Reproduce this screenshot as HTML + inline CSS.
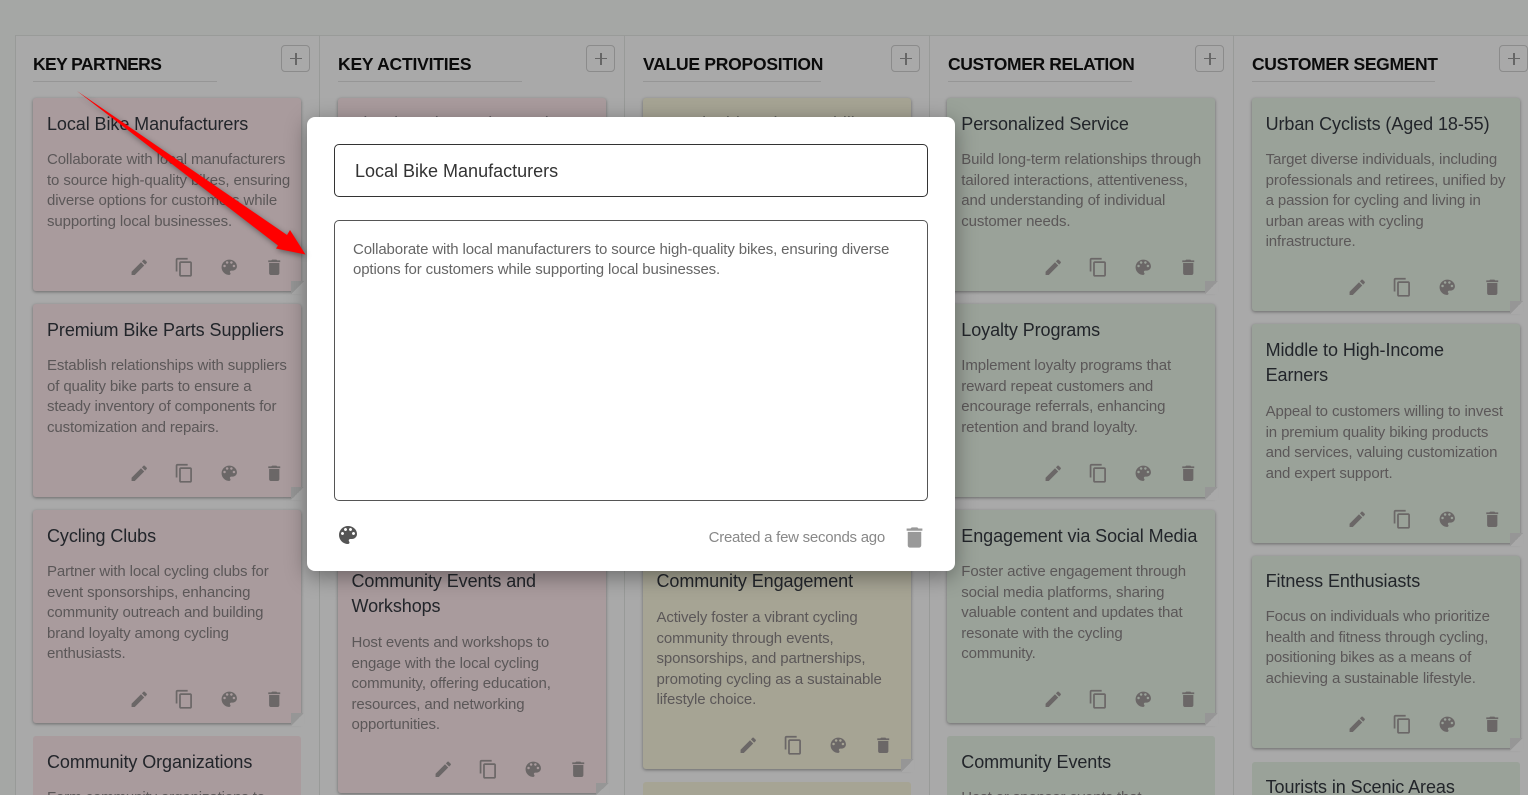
<!DOCTYPE html>
<html><head><meta charset="utf-8"><title>Canvas</title>
<style>
html,body{margin:0;padding:0;width:1528px;height:795px;overflow:hidden;background:#a5a7a5;font-family:"Liberation Sans",sans-serif}
#r{position:relative;width:1528px;height:795px;overflow:hidden;background:#a5a7a5}
.col{position:absolute;top:35px;height:760px;background:#a9a9a9;border-left:1px solid #989a98;border-top:1px solid #999b99;box-sizing:border-box}
.hd{position:absolute;top:52.5px;height:28.5px;line-height:22px;font-size:17.5px;font-weight:700;color:#0b0b0b;white-space:nowrap;border-bottom:1px solid #969696}
.plus{position:absolute;top:45px;width:29px;height:27px;border:1px solid #8b8b8b;border-radius:4px;box-sizing:border-box;background:#a9a9a9}
.plus:before{content:"";position:absolute;left:8px;top:11.6px;width:12px;height:1.6px;background:#666}
.plus:after{content:"";position:absolute;left:13.2px;top:6.5px;width:1.6px;height:12px;background:#666}
.c{position:absolute;width:268px;border-radius:3px 3px 0 3px;box-shadow:0 1px 3px rgba(0,0,0,.38);box-sizing:border-box}
.p{background:#a99b9d}.y{background:#a6a494}.g{background:#9aa299}
.c h3{margin:0;position:absolute;left:14px;top:13.5px;font-size:18px;font-weight:400;line-height:25.6px;color:#22252a;white-space:nowrap;letter-spacing:-.08px}
.c div{position:absolute;left:14px;font-size:15px;line-height:20.6px;color:#5b5758;white-space:nowrap;letter-spacing:-.12px}
.c svg{position:absolute;bottom:14px;width:20.5px;height:20.5px;fill:#6b6767}
.c svg.a{right:152px}.c svg.b{right:107px}.c svg.d{right:62px}.c svg.e{right:17px}
.c i{position:absolute;right:-3px;bottom:-3px;width:13px;height:13px;background:linear-gradient(to bottom right,#969696 50%,#a9a9a9 50%)}
.cut{overflow:hidden;border-radius:3px 3px 0 0;box-shadow:none}
#m{position:absolute;left:307px;top:117px;width:648px;height:454px;background:#fff;border-radius:8px;box-shadow:0 5px 22px rgba(0,0,0,.38)}
#t{position:absolute;left:27px;top:27px;width:594px;height:53px;border:1px solid #333;border-radius:5px;box-sizing:border-box;font-size:18px;line-height:53px;padding-left:20px;color:#333}
#x{position:absolute;left:27px;top:103px;width:594px;height:281px;border:1px solid #555;border-radius:5px;box-sizing:border-box;font-size:15px;line-height:20px;color:#666;padding:19px 18px;white-space:nowrap;letter-spacing:-.13px}
#w{position:absolute;right:70px;top:411px;font-size:15px;line-height:20px;color:#888;white-space:nowrap;letter-spacing:-.25px}
</style></head><body><div id="r">
<svg width="0" height="0" style="position:absolute"><defs>
<symbol id="ed" viewBox="0 0 24 24"><path d="M3 17.25V21h3.75L17.81 9.94l-3.75-3.75L3 17.25zM20.71 7.04c.39-.39.39-1.02 0-1.41l-2.34-2.34c-.39-.39-1.02-.39-1.41 0l-1.83 1.83 3.75 3.75 1.83-1.83z"/></symbol>
<symbol id="co" viewBox="0 0 24 24"><path d="M16 1H4c-1.1 0-2 .9-2 2v14h2V3h12V1zm3 4H8c-1.1 0-2 .9-2 2v14c0 1.1.9 2 2 2h11c1.1 0 2-.9 2-2V7c0-1.1-.9-2-2-2zm0 16H8V7h11v14z"/></symbol>
<symbol id="pa" viewBox="0 0 24 24"><path d="M12 3c-4.97 0-9 4.03-9 9s4.03 9 9 9c.83 0 1.5-.67 1.5-1.5 0-.39-.15-.74-.39-1.01-.23-.26-.38-.61-.38-.99 0-.83.67-1.5 1.5-1.5H16c2.76 0 5-2.24 5-5 0-4.42-4.03-8-9-8zm-5.5 9c-.83 0-1.5-.67-1.5-1.5S5.67 9 6.5 9 8 9.67 8 10.5 7.33 12 6.5 12zm3-4C8.67 8 8 7.33 8 6.5S8.67 5 9.5 5s1.5.67 1.5 1.5S10.33 8 9.5 8zm5 0c-.83 0-1.5-.67-1.5-1.5S13.67 5 14.5 5s1.5.67 1.5 1.5S15.33 8 14.5 8zm3 4c-.83 0-1.5-.67-1.5-1.5S16.67 9 17.5 9s1.5.67 1.5 1.5-.67 1.5-1.5 1.5z"/></symbol>
<symbol id="de" viewBox="0 0 24 24"><path d="M6 19c0 1.1.9 2 2 2h8c1.1 0 2-.9 2-2V7H6v12zM19 4h-3.5l-1-1h-5l-1 1H5v2h14V4z"/></symbol>
</defs></svg>

<div class="col" style="left:15px;width:305px"></div>
<div class="col" style="left:319px;width:306px"></div>
<div class="col" style="left:624px;width:306px"></div>
<div class="col" style="left:929px;width:305px"></div>
<div class="col" style="left:1233px;width:295px"></div>

<div class="hd" style="left:33px;width:184px;letter-spacing:-.6px">KEY PARTNERS</div>
<div class="hd" style="left:338px;width:184px;letter-spacing:-.2px">KEY ACTIVITIES</div>
<div class="hd" style="left:643px;width:178px;letter-spacing:-.25px">VALUE PROPOSITION</div>
<div class="hd" style="left:948px;width:184px;letter-spacing:-.38px">CUSTOMER RELATION</div>
<div class="hd" style="left:1252px;width:183px;letter-spacing:-.35px">CUSTOMER SEGMENT</div>
<div class="plus" style="left:281px"></div>
<div class="plus" style="left:586px"></div>
<div class="plus" style="left:891px"></div>
<div class="plus" style="left:1195px"></div>
<div class="plus" style="left:1499px"></div>

<!-- Column 1 -->
<section class="c p" style="left:33px;top:98px;height:193px"><h3>Local Bike Manufacturers</h3><div style="top:52px">Collaborate with local manufacturers<br>to source high-quality bikes, ensuring<br>diverse options for customers while<br>supporting local businesses.</div>
<svg class="a"><use href="#ed"/></svg><svg class="b"><use href="#co"/></svg><svg class="d"><use href="#pa"/></svg><svg class="e"><use href="#de"/></svg><i></i></section>
<section class="c p" style="left:33px;top:304px;height:193px"><h3>Premium Bike Parts Suppliers</h3><div style="top:52px">Establish relationships with suppliers<br>of quality bike parts to ensure a<br>steady inventory of components for<br>customization and repairs.</div>
<svg class="a"><use href="#ed"/></svg><svg class="b"><use href="#co"/></svg><svg class="d"><use href="#pa"/></svg><svg class="e"><use href="#de"/></svg><i></i></section>
<section class="c p" style="left:33px;top:510px;height:213px"><h3>Cycling Clubs</h3><div style="top:52px">Partner with local cycling clubs for<br>event sponsorships, enhancing<br>community outreach and building<br>brand loyalty among cycling<br>enthusiasts.</div>
<svg class="a"><use href="#ed"/></svg><svg class="b"><use href="#co"/></svg><svg class="d"><use href="#pa"/></svg><svg class="e"><use href="#de"/></svg><i></i></section>
<section class="c p cut" style="left:33px;top:736px;height:59px"><h3>Community Organizations</h3><div style="top:52px">Form community organizations to</div></section>

<!-- Column 2 -->
<section class="c p" style="left:337.5px;top:98px;height:193px"><h3>Bicycle Sales and Rentals</h3></section>
<section class="c p" style="left:337.5px;top:555px;height:238px"><h3>Community Events and<br>Workshops</h3><div style="top:78px">Host events and workshops to<br>engage with the local cycling<br>community, offering education,<br>resources, and networking<br>opportunities.</div>
<svg class="a"><use href="#ed"/></svg><svg class="b"><use href="#co"/></svg><svg class="d"><use href="#pa"/></svg><svg class="e"><use href="#de"/></svg><i style="bottom:-2px;height:12px"></i></section>

<!-- Column 3 -->
<section class="c y" style="left:642.5px;top:98px;height:193px"><h3>Sustainable Urban Mobility</h3></section>
<section class="c y" style="left:642.5px;top:555px;height:214px"><h3>Community Engagement</h3><div style="top:53px">Actively foster a vibrant cycling<br>community through events,<br>sponsorships, and partnerships,<br>promoting cycling as a sustainable<br>lifestyle choice.</div>
<svg class="a"><use href="#ed"/></svg><svg class="b"><use href="#co"/></svg><svg class="d"><use href="#pa"/></svg><svg class="e"><use href="#de"/></svg><i></i></section>
<section class="c y cut" style="left:642.5px;top:782px;height:13px"></section>

<!-- Column 4 -->
<section class="c g" style="left:947.3px;top:98px;height:193px"><h3>Personalized Service</h3><div style="top:52px">Build long-term relationships through<br>tailored interactions, attentiveness,<br>and understanding of individual<br>customer needs.</div>
<svg class="a"><use href="#ed"/></svg><svg class="b"><use href="#co"/></svg><svg class="d"><use href="#pa"/></svg><svg class="e"><use href="#de"/></svg><i></i></section>
<section class="c g" style="left:947.3px;top:304px;height:193px"><h3>Loyalty Programs</h3><div style="top:52px">Implement loyalty programs that<br>reward repeat customers and<br>encourage referrals, enhancing<br>retention and brand loyalty.</div>
<svg class="a"><use href="#ed"/></svg><svg class="b"><use href="#co"/></svg><svg class="d"><use href="#pa"/></svg><svg class="e"><use href="#de"/></svg><i></i></section>
<section class="c g" style="left:947.3px;top:510px;height:213px"><h3>Engagement via Social Media</h3><div style="top:52px">Foster active engagement through<br>social media platforms, sharing<br>valuable content and updates that<br>resonate with the cycling<br>community.</div>
<svg class="a"><use href="#ed"/></svg><svg class="b"><use href="#co"/></svg><svg class="d"><use href="#pa"/></svg><svg class="e"><use href="#de"/></svg><i></i></section>
<section class="c g cut" style="left:947.3px;top:736px;height:59px"><h3>Community Events</h3><div style="top:52px">Host or sponsor events that</div></section>

<!-- Column 5 -->
<section class="c g" style="left:1251.6px;top:98px;height:213px"><h3>Urban Cyclists (Aged 18-55)</h3><div style="top:52px">Target diverse individuals, including<br>professionals and retirees, unified by<br>a passion for cycling and living in<br>urban areas with cycling<br>infrastructure.</div>
<svg class="a"><use href="#ed"/></svg><svg class="b"><use href="#co"/></svg><svg class="d"><use href="#pa"/></svg><svg class="e"><use href="#de"/></svg><i></i></section>
<section class="c g" style="left:1251.6px;top:324px;height:219px"><h3>Middle to High-Income<br>Earners</h3><div style="top:78px">Appeal to customers willing to invest<br>in premium quality biking products<br>and services, valuing customization<br>and expert support.</div>
<svg class="a"><use href="#ed"/></svg><svg class="b"><use href="#co"/></svg><svg class="d"><use href="#pa"/></svg><svg class="e"><use href="#de"/></svg><i></i></section>
<section class="c g" style="left:1251.6px;top:556px;height:192px"><h3 style="top:12.5px">Fitness Enthusiasts</h3><div style="top:51px">Focus on individuals who prioritize<br>health and fitness through cycling,<br>positioning bikes as a means of<br>achieving a sustainable lifestyle.</div>
<svg class="a"><use href="#ed"/></svg><svg class="b"><use href="#co"/></svg><svg class="d"><use href="#pa"/></svg><svg class="e"><use href="#de"/></svg><i></i></section>
<section class="c g cut" style="left:1251.6px;top:762px;height:33px"><h3 style="top:12.5px">Tourists in Scenic Areas</h3></section>

<!-- Modal -->
<div id="m">
<div id="t">Local Bike Manufacturers</div>
<div id="x">Collaborate with local manufacturers to source high-quality bikes, ensuring diverse<br>options for customers while supporting local businesses.</div>
<svg style="position:absolute;left:29px;top:406px;fill:#555" width="24" height="24"><use href="#pa"/></svg>
<div id="w">Created a few seconds ago</div>
<svg style="position:absolute;left:594px;top:407px;fill:#999" width="27" height="27"><use href="#de"/></svg>
</div>

<!-- Red arrow -->
<svg style="position:absolute;left:0;top:0;filter:drop-shadow(1px 2px 3px rgba(0,0,0,.4))" width="1528" height="795"><polygon points="77,91 287,235 290,230 305.5,254.5 276,248.5 278,245.5" fill="#ff0000"/></svg>
</div></body></html>
